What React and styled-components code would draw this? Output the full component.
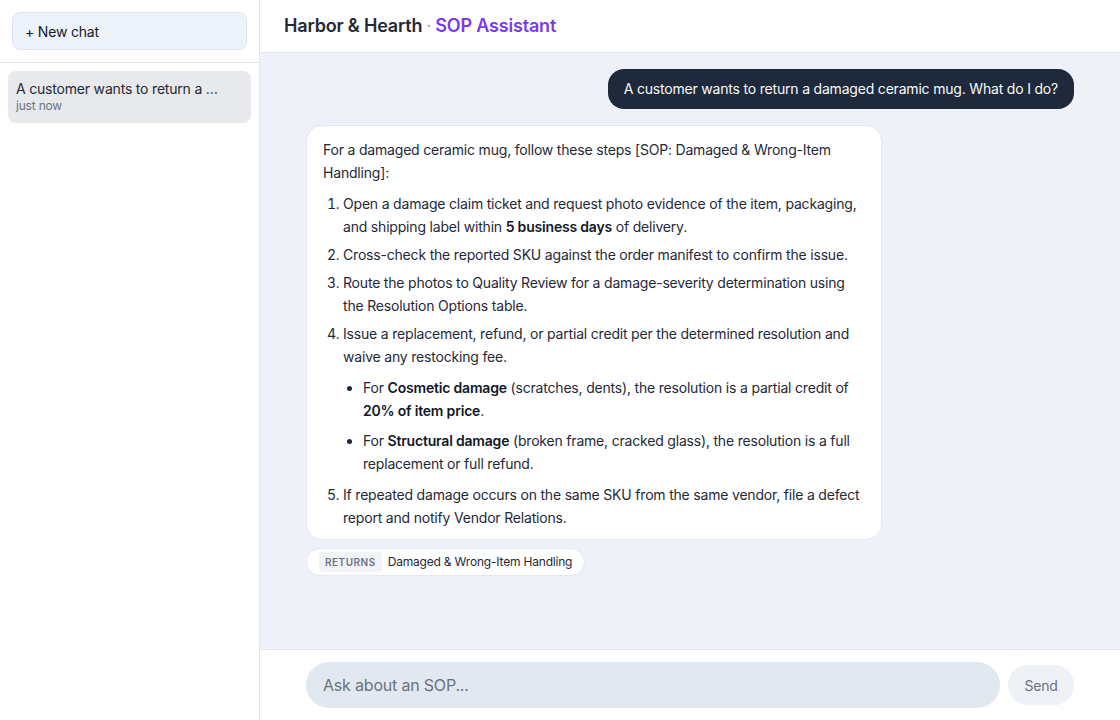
import React from 'react';
import styled, { createGlobalStyle } from 'styled-components';

const GlobalStyle = createGlobalStyle`
  html, body, #root {
    margin: 0;
    height: 100%;
  }
  body {
    font-family: Inter, "Noto Sans", "Liberation Sans", sans-serif;
    letter-spacing: -0.012em;
    color: #1f2937;
    background: #ffffff;
  }
  * {
    box-sizing: border-box;
  }
`;

const Shell = styled.div`
  display: flex;
  height: 100vh;
  width: 100vw;
  overflow: hidden;
`;

const Sidebar = styled.aside`
  width: 260px;
  flex-shrink: 0;
  border-right: 1px solid #e2e6ee;
  background: #ffffff;
  display: flex;
  flex-direction: column;
`;

const SidebarTop = styled.div`
  padding: 12px;
  border-bottom: 1px solid #e2e6ee;
`;

const NewChatButton = styled.button`
  width: 100%;
  height: 38px;
  text-align: left;
  padding: 0 12px;
  font: inherit;
  letter-spacing: inherit;
  font-size: 14px;
  color: #111827;
  background: #eef2fa;
  border: 1px solid #dfe5f0;
  border-radius: 8px;
  cursor: pointer;
`;

const ChatList = styled.div`
  padding: 8px;
  display: flex;
  flex-direction: column;
  gap: 4px;
`;

const ChatItem = styled.div`
  padding: 9px 8px;
  border-radius: 8px;
  background: ${(props) => (props.active ? '#e8e9ec' : 'transparent')};
`;

const ChatTitle = styled.div`
  font-size: 14px;
  line-height: 18px;
  color: #1f2937;
  white-space: nowrap;
  overflow: hidden;
  text-overflow: ellipsis;
`;

const ChatTime = styled.div`
  font-size: 12px;
  line-height: 16px;
  color: #6b7280;
`;

const Main = styled.main`
  flex: 1;
  display: flex;
  flex-direction: column;
  background: #eef1f8;
  min-width: 0;
`;

const Header = styled.header`
  height: 53px;
  flex-shrink: 0;
  background: #ffffff;
  border-bottom: 1px solid #e2e6ee;
  display: flex;
  align-items: center;
  padding: 0 24px 2px;
  font-size: 18px;
  font-weight: 600;
  letter-spacing: -0.01em;
  color: #1f2937;
`;

const Dot = styled.span`
  color: #9ca3af;
  font-weight: 400;
  margin: 0 4px;
`;

const Accent = styled.span`
  color: #7c3aed;
`;

const Messages = styled.div`
  flex: 1;
  overflow: auto;
  padding: 16px 46px;
  display: flex;
  flex-direction: column;
`;

const UserBubble = styled.div`
  align-self: flex-end;
  max-width: 75%;
  background: #1e293b;
  color: #f8fafc;
  font-size: 14px;
  line-height: 20px;
  padding: 10px 16px;
  border-radius: 16px;
`;

const AssistantGroup = styled.div`
  align-self: flex-start;
  max-width: 75%;
  margin-top: 16px;
  display: flex;
  flex-direction: column;
  align-items: flex-start;
  gap: 8px;
`;

const AssistantBubble = styled.div`
  background: #ffffff;
  border: 1px solid #e3e8f0;
  border-radius: 16px;
  padding: 12px 16px 10px;
  font-size: 14px;
  line-height: 23px;
  color: #1f2937;

  p {
    margin: 0 0 8px;
  }
  ol {
    margin: 0;
    padding-left: 20px;
  }
  ol > li {
    margin: 0 0 5px;
  }
  ol > li:last-child {
    margin-bottom: 0;
  }
  ul {
    list-style: disc;
    margin: 8px 0;
    padding-left: 20px;
  }
  ul > li {
    margin: 0 0 7px;
  }
  ul > li:last-child {
    margin-bottom: 0;
  }
  strong {
    font-weight: 600;
    color: #111827;
  }
`;

const SourceChip = styled.div`
  display: inline-flex;
  align-items: center;
  gap: 6px;
  background: #ffffff;
  border: 1px solid #e3e8f0;
  border-radius: 999px;
  padding: 3px 12px;
  font-size: 12px;
  line-height: 18px;
  color: #1f2937;
`;

const SourceTag = styled.span`
  background: #f1f3f7;
  color: #6b7280;
  font-size: 10px;
  font-weight: 600;
  letter-spacing: 0.05em;
  text-transform: uppercase;
  padding: 1px 6px;
  border-radius: 4px;
`;

const Composer = styled.form`
  flex-shrink: 0;
  background: #ffffff;
  border-top: 1px solid #e2e6ee;
  padding: 12px 46px;
  display: flex;
  align-items: center;
  gap: 8px;
`;

const Input = styled.input`
  flex: 1;
  height: 46px;
  border: none;
  outline: none;
  border-radius: 999px;
  background: #e2e8f0;
  padding: 0 17px;
  font: inherit;
  letter-spacing: inherit;
  font-size: 16px;
  color: #1f2937;

  &::placeholder {
    color: #6b7280;
  }
`;

const SendButton = styled.button`
  height: 40px;
  width: 66px;
  border: none;
  border-radius: 999px;
  background: #eef1f6;
  color: #6b7280;
  font: inherit;
  letter-spacing: inherit;
  font-size: 14px;
  cursor: pointer;
`;

const App = () => {
  return (
    <>
      <GlobalStyle />
      <Shell>
        <Sidebar>
          <SidebarTop>
            <NewChatButton>+ New chat</NewChatButton>
          </SidebarTop>
          <ChatList>
            <ChatItem active>
              <ChatTitle>A customer wants to return a …</ChatTitle>
              <ChatTime>just now</ChatTime>
            </ChatItem>
          </ChatList>
        </Sidebar>
        <Main>
          <Header>
            Harbor &amp; Hearth<Dot>·</Dot>
            <Accent>SOP Assistant</Accent>
          </Header>
          <Messages>
            <UserBubble>
              A customer wants to return a damaged ceramic mug. What do I do?
            </UserBubble>
            <AssistantGroup>
              <AssistantBubble>
                <p>
                  For a damaged ceramic mug, follow these steps [SOP: Damaged &amp;
                  Wrong-Item Handling]:
                </p>
                <ol>
                  <li>
                    Open a damage claim ticket and request photo evidence of the
                    item, packaging, and shipping label within{' '}
                    <strong>5 business days</strong> of delivery.
                  </li>
                  <li>
                    Cross-check the reported SKU against the order manifest to
                    confirm the issue.
                  </li>
                  <li>
                    Route the photos to Quality Review for a damage-severity
                    determination using the Resolution Options table.
                  </li>
                  <li>
                    Issue a replacement, refund, or partial credit per the
                    determined resolution and waive any restocking fee.
                    <ul>
                      <li>
                        For <strong>Cosmetic damage</strong> (scratches, dents),
                        the resolution is a partial credit of{' '}
                        <strong>20% of item price</strong>.
                      </li>
                      <li>
                        For <strong>Structural damage</strong> (broken frame,
                        cracked glass), the resolution is a full replacement or
                        full refund.
                      </li>
                    </ul>
                  </li>
                  <li>
                    If repeated damage occurs on the same SKU from the same
                    vendor, file a defect report and notify Vendor Relations.
                  </li>
                </ol>
              </AssistantBubble>
              <SourceChip>
                <SourceTag>Returns</SourceTag>
                Damaged &amp; Wrong-Item Handling
              </SourceChip>
            </AssistantGroup>
          </Messages>
          <Composer onSubmit={(e) => e.preventDefault()}>
            <Input placeholder="Ask about an SOP..." />
            <SendButton type="submit">Send</SendButton>
          </Composer>
        </Main>
      </Shell>
    </>
  );
};

export default App;
